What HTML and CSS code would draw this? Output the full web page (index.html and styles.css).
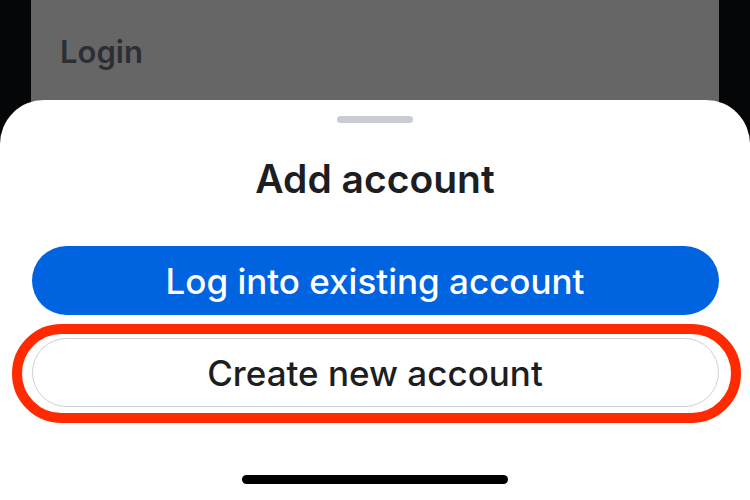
FILE: index.html
```html
<!DOCTYPE html>
<html>
<head>
<meta charset="utf-8">
<link rel="stylesheet" href="styles.css">
</head>
<body>
<div class="screen">
  <div class="backdrop">
    <div class="backdrop-title">Login</div>
  </div>
  <div class="sheet">
    <div class="handle"></div>
    <h1 class="sheet-title">Add account</h1>
    <div class="actions">
      <button class="btn btn-primary">Log into existing account</button>
      <div class="highlight-wrap">
        <button class="btn btn-secondary">Create new account</button>
        <div class="highlight-ring"></div>
      </div>
    </div>
    <div class="home-indicator"></div>
  </div>
</div>
</body>
</html>
```
FILE: styles.css
```css
* { box-sizing: border-box; }
html, body {
  margin: 0;
  padding: 0;
  background: #050608;
  font-family: Inter, "Noto Sans", sans-serif;
}
.screen {
  width: 750px;
  height: 500px;
  overflow: hidden;
  display: flex;
  flex-direction: column;
}
.backdrop {
  margin: 0 31px;
  height: 150px;
  flex: none;
  background: #666666;
  padding: 33px 0 0 29px;
}
.backdrop-title {
  font-size: 31px;
  font-weight: 600;
  color: #2b2e33;
  line-height: 38px;
}
.sheet {
  position: relative;
  margin-top: -50px;
  flex: 1;
  background: #ffffff;
  border-radius: 44px 44px 0 0;
  display: flex;
  flex-direction: column;
  align-items: center;
}
.handle {
  margin-top: 16px;
  width: 76px;
  height: 7px;
  border-radius: 4px;
  background: #c9ccd1;
}
.sheet-title {
  margin: 32px 0 0;
  font-size: 39px;
  font-weight: 600;
  color: #1c1e21;
  line-height: 48px;
}
.actions {
  margin-top: 43px;
  width: 687px;
  display: flex;
  flex-direction: column;
  gap: 23px;
}
.btn {
  width: 100%;
  height: 69px;
  border-radius: 35px;
  font-family: inherit;
  font-size: 35px;
  font-weight: 500;
  display: flex;
  align-items: center;
  justify-content: center;
  padding: 0;
}
.btn-primary {
  background: #0064e0;
  color: #ffffff;
  border: none;
}
.btn-secondary {
  background: #ffffff;
  color: #1c1e21;
  border: 1.5px solid #ccd0d5;
}
.highlight-wrap {
  position: relative;
}
.highlight-ring {
  position: absolute;
  top: -14px;
  bottom: -16px;
  left: -20px;
  right: -22px;
  border: 10px solid #ff2a00;
  border-radius: 52px;
  pointer-events: none;
}
.home-indicator {
  position: absolute;
  left: 242px;
  bottom: 16px;
  width: 266px;
  height: 9px;
  border-radius: 5px;
  background: #000000;
}
```
